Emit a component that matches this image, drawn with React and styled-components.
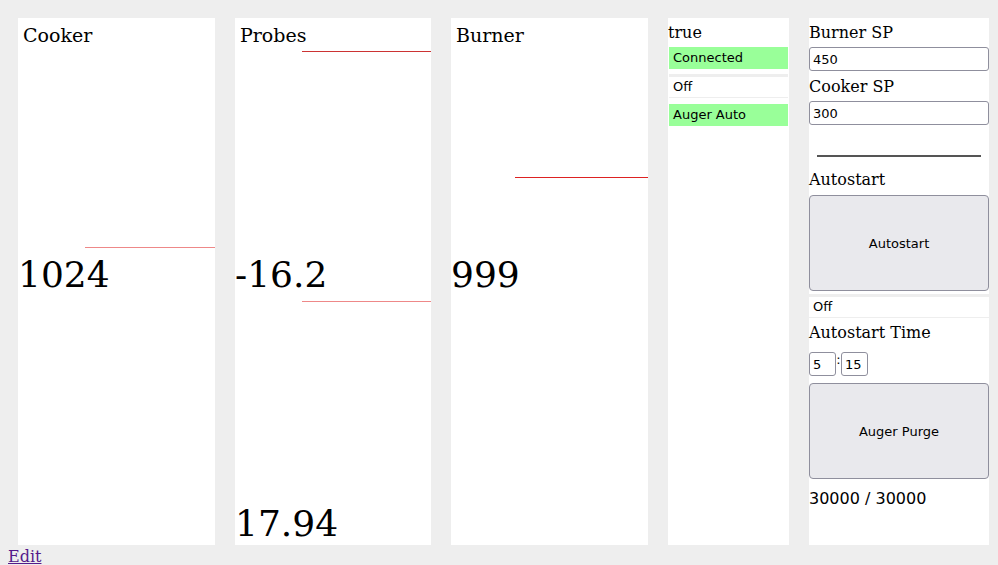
import React from "react";
import styled, { createGlobalStyle } from "styled-components";

const Global = createGlobalStyle`
  html { overflow: hidden; }
  body {
    margin: 8px 8px 0;
    background: #eeeeee;
    font-family: "DejaVu Serif", serif;
    color: #000;
  }
`;

const Row = styled.div`
  display: flex;
  gap: 20px;
  padding: 10px 0 0 10px;
`;

const Panel = styled.div`
  position: relative;
  box-sizing: border-box;
  width: ${(p) => p.$w}px;
  height: 527px;
  background: #fff;
`;

const GaugePanel = styled(Panel)`
  display: grid;
  grid-template-rows: 1fr auto 1fr;
  padding-top: 5px;
`;

const Title = styled.div`
  font-size: 19px;
  line-height: 24px;
  padding-left: 5px;
  align-self: start;
`;

const Value = styled.div`
  font-size: 36px;
  line-height: 43px;
  white-space: nowrap;
  align-self: ${(p) => (p.$bottom ? "end" : "center")};
  margin-bottom: ${(p) => (p.$bottom ? 0 : 20)}px;
`;

const Marker = styled.div`
  position: absolute;
  left: ${(p) => p.$left}%;
  right: 0;
  top: ${(p) => p.$top}px;
  height: 1px;
  background: ${(p) => p.$color};
`;

const SidePanel = styled(Panel)`
  display: flex;
  flex-direction: column;
  padding-top: 5px;
`;

const Label = styled.div`
  font-size: 16px;
  line-height: 19px;
  margin-top: ${(p) => p.$mt || 0}px;
`;

const Status = styled.div`
  box-sizing: border-box;
  height: 22px;
  margin: ${(p) => p.$mt || 0}px ${(p) => (p.$inset ? 1 : 0)}px 0;
  padding-left: 4px;
  font-family: "DejaVu Sans", sans-serif;
  font-size: 13px;
  line-height: 20px;
  background: ${(p) => (p.$on ? "#99ff99" : "#fff")};
  border-top: 1px solid ${(p) => (p.$on ? "#99ff99" : "#eeeeee")};
  border-bottom: 1px solid ${(p) => (p.$on ? "#99ff99" : "#eeeeee")};
  ${(p) => (!p.$on ? "box-shadow: 0 -2px 0 #eeeeee;" : "")}
`;

const Field = styled.input`
  box-sizing: border-box;
  width: ${(p) => (p.$small ? "27px" : "100%")};
  height: 24px;
  margin: ${(p) => (p.$small ? "0" : "5px 0 6px")};
  padding: 0 3px;
  border: 1px solid #8f8f9d;
  border-radius: 3px;
  background: #fff;
  font-family: "DejaVu Sans", sans-serif;
  font-size: 13px;
  color: #000;
  outline: none;
`;

const Rule = styled.div`
  height: 2px;
  background: #555;
  margin: 24px 8px 0;
`;

const BigButton = styled.button`
  box-sizing: border-box;
  width: 100%;
  height: 96px;
  margin-top: ${(p) => p.$mt || 0}px;
  background: #e9e9ed;
  border: 1px solid #8f8f9d;
  border-radius: 4px;
  font-family: "DejaVu Sans", sans-serif;
  font-size: 13px;
  color: #000;
`;

const TimeRow = styled.div`
  display: flex;
  align-items: flex-start;
  margin-top: 10px;
`;

const Colon = styled.span`
  font-size: 13px;
  line-height: 16px;
  width: 5px;
  text-align: center;
  font-family: "DejaVu Sans", sans-serif;
`;

const Counter = styled.div`
  margin-top: 10px;
  font-family: "DejaVu Sans", sans-serif;
  font-size: 16px;
  line-height: 19px;
`;

const EditLink = styled.a`
  display: block;
  font-size: 16px;
  line-height: 19px;
  margin-top: 2px;
  color: #551a8b;
  text-decoration: underline;
`;

const gauges = [
  { title: "Cooker", w: 197, mid: "1024", lines: [{ top: 229, left: 34, color: "#ee8888" }] },
  {
    title: "Probes",
    w: 196,
    mid: "-16.2",
    bottom: "17.94",
    lines: [
      { top: 33, left: 34, color: "#cc3333" },
      { top: 283, left: 34, color: "#ee8888" },
    ],
  },
  { title: "Burner", w: 197, mid: "999", lines: [{ top: 159, left: 32.5, color: "#dd2222" }] },
];

function Gauge({ g }) {
  return (
    <GaugePanel $w={g.w}>
      <Title>{g.title}</Title>
      <Value>{g.mid}</Value>
      {g.bottom ? <Value $bottom>{g.bottom}</Value> : <div />}
      {g.lines.map((l, i) => (
        <Marker key={i} $top={l.top} $left={l.left} $color={l.color} />
      ))}
    </GaugePanel>
  );
}

export default function App() {
  return (
    <>
      <Global />
      <Row>
        {gauges.map((g) => (
          <Gauge key={g.title} g={g} />
        ))}
        <SidePanel $w={121}>
          <Label>true</Label>
          <Status $on $inset $mt={5}>Connected</Status>
          <Status $inset $mt={7}>Off</Status>
          <Status $on $inset $mt={6}>Auger Auto</Status>
        </SidePanel>
        <SidePanel $w={180}>
          <Label>Burner SP</Label>
          <Field defaultValue="450" />
          <Label>Cooker SP</Label>
          <Field defaultValue="300" />
          <Rule />
          <Label $mt={13}>Autostart</Label>
          <BigButton $mt={6}>Autostart</BigButton>
          <Status $mt={5}>Off</Status>
          <Label $mt={5}>Autostart Time</Label>
          <TimeRow>
            <Field $small defaultValue="5" />
            <Colon>:</Colon>
            <Field $small defaultValue="15" />
          </TimeRow>
          <BigButton $mt={7}>Auger Purge</BigButton>
          <Counter>30000 / 30000</Counter>
        </SidePanel>
      </Row>
      <EditLink href="#">Edit</EditLink>
    </>
  );
}
